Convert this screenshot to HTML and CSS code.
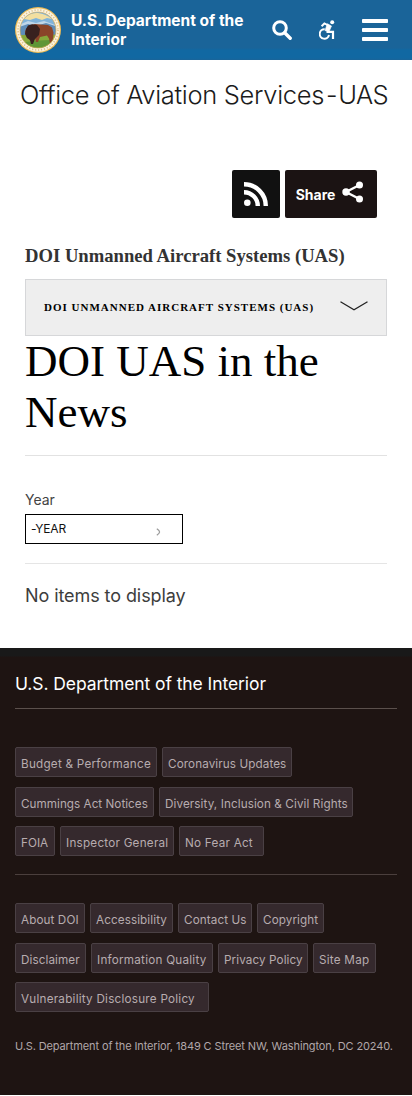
FILE: index.html
```html
<!DOCTYPE html>
<html lang="en">
<head>
<meta charset="utf-8">
<meta name="viewport" content="width=device-width, initial-scale=1">
<title>DOI UAS in the News</title>
<link rel="stylesheet" href="styles.css">
</head>
<body>
<header class="topbar">
  <svg class="seal" viewBox="0 0 46 46" aria-label="Department seal">
    <defs><clipPath id="scene"><circle cx="23" cy="23" r="18"/></clipPath></defs>
    <circle cx="23" cy="23" r="23" fill="#eebc55"/>
    <circle cx="23" cy="23" r="21.800" fill="#fbf3df"/>
    <circle cx="23" cy="23" r="20" fill="none" stroke="#dfc18a" stroke-width="1.600" stroke-dasharray="1.200 1.800"/>
    <g clip-path="url(#scene)">
      <rect width="46" height="46" fill="#7fb2da"/>
      <path d="M9 12q6-7 14-6t14 6l-5-1-5 2-6-2-6 2z" fill="#f3dfa0"/>
      <path d="M4 18l9-4 8 2 8-2 14 5v4H4z" fill="#bfd6e8"/>
      <path d="M4 20l9-3 8 2 10-3 12 4v9H4z" fill="#5e8db8"/>
      <path d="M0 29q20-3 46-1v18H0z" fill="#86a83a"/>
      <path d="M5 36q15-3 34-3v5l-10 7H12z" fill="#5f9636"/>
      <path d="M11 22l3-3.500 6-1.500 6 .5 7 .5 4 2.500 1.500 5-.5 6-1 5h-2l-1-5-2-3-7 1.500-2 5h-2l-1-4-3 0v3h-2l-1-3-2-1-2-5z" fill="#8a4429"/>
      <path d="M11 22l2-3.500 4-1.300 5 .8 3 4-1 6-4 4-2 5h-2l-1-4-3-2-2-4z" fill="#38211f"/>
    </g>
    <circle cx="23" cy="23" r="18" fill="none" stroke="#d9ad58" stroke-width=".7"/>
  </svg>
  <div class="brand">U.S. Department of the<br>Interior</div>
  <svg class="search" viewBox="0 0 20 20"><circle cx="8" cy="8" r="6.300" fill="none" stroke="#fff" stroke-width="3"/><path d="M12.700 12.700l5.500 5.500" stroke="#fff" stroke-width="3.400" stroke-linecap="round"/></svg>
  <svg class="access" viewBox="0 0 16 20" fill="none" stroke="#fff"><circle cx="13.200" cy="2.200" r="2" fill="#fff" stroke="none"/><path d="M2.600 6.200L5.400 3.500l4.600 2.300" stroke-width="1.900"/><path d="M8.300 3.700L12.500 6 10 11.800 6 10.500z" fill="#fff" stroke-width=".6"/><path d="M7.500 11.800H14V19" stroke-width="2.200"/><path d="M5.700 9.300A4.700 4.700 0 1 0 10 15" stroke-width="2"/></svg>
  <svg class="menu" viewBox="0 0 26 22" fill="#fff"><rect width="26" height="4" rx=".8"/><rect y="9" width="26" height="4" rx=".8"/><rect y="18" width="26" height="4" rx=".8"/></svg>
</header>
<div class="office"><span class="office-name">Office of Aviation Services</span><span class="dash">-</span><span class="unit">UAS</span></div>
<main class="content">
  <div class="actions">
    <a class="action rss"><svg width="24" height="24" viewBox="0 0 24 24"><circle cx="3.300" cy="20.700" r="3.300" fill="#fff"/><path d="M0 10.200A13.800 13.800 0 0 1 13.800 24M0 2.200A21.800 21.800 0 0 1 21.800 24" fill="none" stroke="#fff" stroke-width="4.400"/></svg></a>
    <a class="action share"><span>Share</span><svg width="22" height="22" viewBox="0 0 22 22"><path d="M18 3.800L4 11l14 7.200" fill="none" stroke="#fff" stroke-width="2.400"/><g fill="#fff"><circle cx="17.500" cy="4" r="3.500"/><circle cx="4" cy="11" r="3.700"/><circle cx="17.500" cy="18" r="3.500"/></g></svg></a>
  </div>
  <h2 class="section">DOI Unmanned Aircraft Systems (UAS)</h2>
  <div class="accordion"><span>DOI UNMANNED AIRCRAFT SYSTEMS (UAS)</span><svg width="28" height="10" viewBox="0 0 28 10"><path d="M.5 .8L14 8.700 27.500.8" fill="none" stroke="#222" stroke-width="1.300"/></svg></div>
  <h1 class="title">DOI UAS in the News</h1>
  <div class="filter">
    <div class="label">Year</div>
    <div class="select"><span>-YEAR</span><svg width="5" height="8" viewBox="0 0 5 8"><path d="M.8.800Q3.500 2.500 3.600 4 3.500 5.500.8 7.200" fill="none" stroke="#999" stroke-width="1.200"/></svg></div>
  </div>
  <p class="empty">No items to display</p>
</main>
<footer class="footer">
  <h3 class="footer-title">U.S. Department of the Interior</h3>
  <nav class="links first">
    <div class="row"><a class="w142 loose">Budget &amp; Performance</a><a class="w130 open">Coronavirus Updates</a></div>
    <div class="row"><a class="w139">Cummings Act Notices</a><a class="w194 open">Diversity, Inclusion &amp; Civil Rights</a></div>
    <div class="row"><a class="w40">FOIA</a><a class="w114 loose">Inspector General</a><a class="w85 loose">No Fear Act</a></div>
  </nav>
  <nav class="links second">
    <div class="row"><a class="w70 open">About DOI</a><a class="w83 open">Accessibility</a><a class="w74 open">Contact Us</a><a class="w67 open">Copyright</a></div>
    <div class="row"><a class="w71 open">Disclaimer</a><a class="w122 loose">Information Quality</a><a class="w90 open">Privacy Policy</a><a class="w63 loose">Site Map</a></div>
    <div class="row"><a class="w194 loose">Vulnerability Disclosure Policy</a></div>
  </nav>
  <p class="address">U.S. Department of the Interior, 1849 C Street NW, Washington, DC 20240.</p>
</footer>
</body>
</html>
```
FILE: styles.css
```css
* { box-sizing: border-box; }
body { margin: 0; background: #fff; color: #333; font-family: Inter, "Liberation Sans", sans-serif; }
svg { display: block; flex: none; }
.topbar { height: 60px; background: linear-gradient(#1a6499 0 48px, #1168a2 50px 58px, #1a6499 60px); display: flex; align-items: center; padding-left: 15px; }
.seal { width: 46px; height: 46px; }
.brand { width: 201px; padding-left: 10px; color: #fff; font-size: 15.500px; font-weight: 700; line-height: 19px; white-space: nowrap; }
.search { width: 20px; height: 20px; margin-left: 10px; }
.access { width: 16px; height: 20px; margin-left: 27px; }
.menu { width: 26px; height: 22px; margin-left: 27px; }
.office { height: 110px; padding: 17px 0 0 20px; color: #1b1b1b; font-size: 25.500px; font-weight: 300; line-height: 36px; letter-spacing: -.32px; white-space: nowrap; }
.dash { margin: 0 1px 0 2px; }
.unit { letter-spacing: -.6px; }
.content { height: 478px; padding: 0 25px; }
.actions { display: flex; gap: 5px; justify-content: flex-end; padding-right: 10px; }
.action { height: 48px; border-radius: 2px; background: #111; color: #fff; display: flex; align-items: center; justify-content: center; }
.rss { width: 48px; }
.share { width: 92px; background: #1b1313; gap: 7px; padding-right: 2px; font-size: 14px; font-weight: 700; }
.share svg { margin-top: -4px; }
.section { margin: 25px 0 0; height: 36px; color: #333; font: 700 18.650px/26px "Liberation Serif", serif; white-space: nowrap; }
.accordion { width: 362px; height: 57px; border: 1px solid #d6d7d9; background: #eee; color: #000; display: flex; align-items: center; justify-content: space-between; padding: 0 18px; font: 700 11px/16px "Liberation Serif", serif; letter-spacing: 1px; white-space: nowrap; }
.accordion span { margin-top: -2px; }
.accordion svg { margin-top: -3px; }
.title { margin: 0; height: 120px; border-bottom: 1px solid #e2e2e2; color: #000; font: 400 45px/51px "Liberation Serif", serif; }
.filter { height: 108px; padding-top: 34px; border-bottom: 1px solid #e5e5e5; }
.label { height: 24px; font-size: 14px; line-height: 20px; color: #444; }
.select { width: 158px; height: 30px; border: 1px solid #000; display: flex; align-items: center; justify-content: space-between; padding: 0 21px 0 5px; font-size: 12px; letter-spacing: -.2px; color: #111; }
.select span { margin-top: -2px; }
.select svg { margin-top: 6px; }
.empty { margin: 19px 0 0; font-size: 18px; line-height: 26px; letter-spacing: -.08px; color: #3d3d3d; }
.footer { height: 447px; padding: 21px 15px 0; background: linear-gradient(#191919 0 8px, #1e1412 9px); color: #fff; }
.footer-title { margin: 0; height: 40px; border-bottom: 1px solid #5b504c; font-size: 17.500px; font-weight: 400; line-height: 30px; letter-spacing: -.08px; white-space: nowrap; }
.links { display: grid; grid-auto-rows: 30px; row-gap: 9.500px; }
.first { padding: 38px 0 18px; border-bottom: 1px solid #4b3f3d; }
.second { padding-top: 28px; }
.row { display: flex; gap: 5px; }
.row a { height: 30px; border: 1px solid #4a4044; border-radius: 2px; padding: 2px 0 0 5px; background: #35292d; color: #b7acaf; font-size: 11.700px; line-height: 28px; letter-spacing: .03px; white-space: nowrap; }
.row .open { letter-spacing: .1px; }
.row .loose { letter-spacing: .24px; }
.w40 { width: 40px; }
.w63 { width: 63px; }
.w67 { width: 67px; }
.w70 { width: 70px; }
.w71 { width: 71px; }
.w74 { width: 74px; }
.w83 { width: 83px; }
.w85 { width: 85px; }
.w90 { width: 90px; }
.w114 { width: 114px; }
.w122 { width: 122px; }
.w130 { width: 130px; }
.w139 { width: 139px; }
.w142 { width: 142px; }
.w194 { width: 194px; }
.address { margin: 24px 0 0; color: #b1a7a9; font-size: 11px; line-height: 20px; letter-spacing: -.12px; white-space: nowrap; }
```
